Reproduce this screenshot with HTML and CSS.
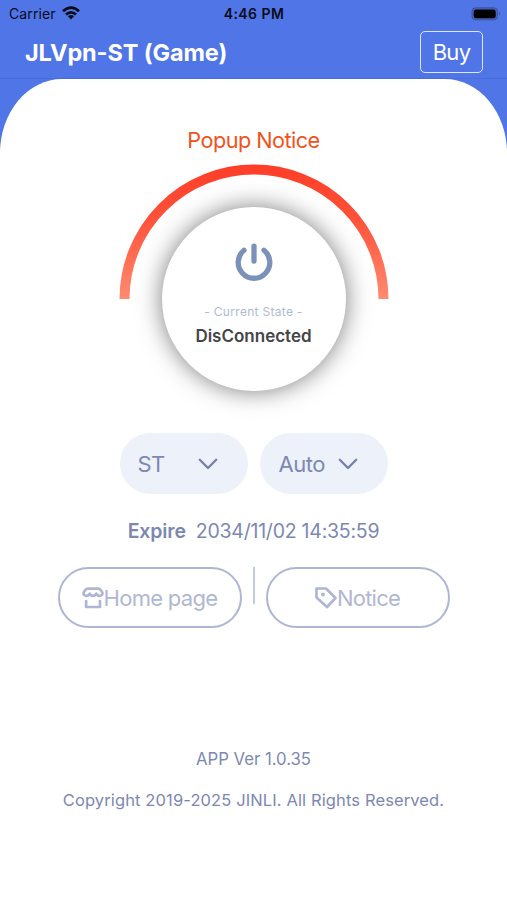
FILE: index.html
```html
<!DOCTYPE html>
<html lang="en">
<head>
<meta charset="utf-8">
<title>JLVpn-ST (Game)</title>
<link rel="stylesheet" href="styles.css">
</head>
<body>
<header class="top">
  <div class="status">
    <div class="carrier"><span>Carrier</span>
      <svg class="wifi" viewBox="0 0 18 14" width="18" height="14"><g fill="none" stroke="#080c18" stroke-width="2.7"><path d="M1 5.3Q9-2.2 17 5.3"/><path d="M4 8.6Q9 4 14 8.6"/></g><path d="M5.9 10.2Q9 7.7 12.1 10.2L9 13.5z" fill="#080c18"/></svg>
    </div>
    <span class="clock">4:46 PM</span>
    <svg class="battery" viewBox="0 0 30 14" width="30" height="14"><rect x="1" y=".8" width="25.5" height="12" rx="3.6" fill="#4663bd" stroke="#3c539a"/><rect x="2.7" y="2.5" width="22" height="8.8" rx="2.2" fill="#000"/><path d="M28 4.8q2 2 0 4z" fill="#3c539a"/></svg>
  </div>
  <nav class="nav"><h1 class="title">JLVpn-ST (Game)</h1><button class="buy">Buy</button></nav>
</header>
<div class="backdrop">
<main class="panel">
  <a class="popup">Popup Notice</a>
  <section class="dial">
    <svg class="arc" viewBox="0 0 270 136" width="270" height="136">
      <defs><linearGradient id="glow" gradientUnits="userSpaceOnUse" x1="0" y1="0" x2="0" y2="135"><stop offset="0" stop-color="#fe3d27"/><stop offset=".4" stop-color="#fe5139"/><stop offset="1" stop-color="#ff8b70"/></linearGradient></defs>
      <path d="M5.5 135A129.5 129.5 0 0 1 264.500 135" fill="none" stroke="url(#glow)" stroke-width="10"/>
    </svg>
    <button class="power">
      <svg viewBox="0 0 38 38" width="38" height="38" fill="none" stroke="#7b91b9" stroke-width="5.3" stroke-linecap="round"><path d="M9 7.200A15.800 15.800 0 1 0 29 7.200"/><path d="M19 3.200V18"/></svg>
      <span class="hint">- Current State -</span>
      <strong class="state">DisConnected</strong>
    </button>
  </section>
  <div class="selects">
    <button class="select"><span class="st">ST</span><svg viewBox="0 0 20 12" width="20" height="12"><path d="M1.800 1.700L10 10L18.200 1.700"/></svg></button>
    <button class="select"><span class="auto">Auto</span><svg viewBox="0 0 20 12" width="20" height="12"><path d="M1.800 1.700L10 10L18.200 1.700"/></svg></button>
  </div>
  <p class="expire"><strong class="label">Expire</strong><span class="date">2034/11/02 14:35:59</span></p>
  <div class="links">
    <a class="link"><svg class="shop" viewBox="0 0 22 22" width="22" height="22"><path d="M5.800 1.600H16.200Q17.800 1.600 18.700 3L20.200 5.200Q21.300 8.500 17.700 8.800Q15.300 8.900 14.300 6.700Q13.300 8.800 11 8.800Q8.700 8.800 7.700 6.700Q6.700 8.900 4.300 8.800Q.7 8.500 1.800 5.200L3.300 3Q4.200 1.600 5.800 1.600ZM4.100 14V20H18V14"/></svg><span class="home">Home page</span></a>
    <i class="divider"></i>
    <a class="link"><svg class="tag" viewBox="0 0 22 22" width="22" height="22"><path d="M1.500 1.500H11L20.500 11L12 20L1.500 10.500Z"/><circle cx="8" cy="7.500" r="1.900"/></svg><span class="notice">Notice</span></a>
  </div>
  <footer class="footer"><p class="version">APP Ver 1.0.35</p><p class="copyright">Copyright 2019-2025 JINLI. All Rights Reserved.</p></footer>
</main>
</div>
</body>
</html>
```
FILE: styles.css
```css
* { box-sizing: border-box; }
body { margin: 0; height: 900px; overflow: hidden; background: #fff; color: #7c88b2; font-family: Inter, "Liberation Sans", sans-serif; }
button { border: 0; padding: 0; font-family: inherit; color: inherit; }
h1, p { margin: 0; }
span, strong, h1, p, .popup { white-space: nowrap; }
.top { height: 79px; background: #5075e7; border-bottom: 1px solid #496cda; }
.status { height: 27px; display: grid; grid-template-columns: 1fr auto 1fr; align-items: center; padding: 0 6px 0 9px; color: #080c18; }
.carrier { display: flex; align-items: center; gap: 6px; font-size: 14px; letter-spacing: .1px; }
.wifi { margin-bottom: 1px; }
.clock { margin-left: -2px; font-size: 14px; font-weight: 600; letter-spacing: .45px; }
.battery { justify-self: end; }
.nav { height: 51px; display: flex; align-items: center; justify-content: space-between; padding: 0 24px 0 25px; color: #fff; }
.title { font-size: 23.500px; font-weight: 700; letter-spacing: -.12px; }
.buy { width: 63px; height: 42px; margin-top: -1px; border: 1.500px solid #dce5ff; border-radius: 5px; background: transparent; font-size: 22px; letter-spacing: -.7px; }
.backdrop { background: linear-gradient(#5075e7 70px, #fff 70px); }
.panel { height: 821px; display: flex; flex-direction: column; align-items: center; background: #fff; border-radius: 62px 62px 0 0 / 74px 74px 0 0; padding-top: 47px; }
.popup { height: 28px; line-height: 28px; font-size: 21.700px; letter-spacing: -.55px; color: #f2511b; }
.dial { width: 270px; height: 240px; margin-top: 10px; display: grid; justify-items: center; }
.arc, .power { grid-area: 1 / 1; }
.power { width: 184px; height: 184px; margin-top: 43px; padding-top: 36px; border-radius: 50%; background: #fff; box-shadow: 0 0 24px rgba(0,0,0,.52); display: flex; flex-direction: column; align-items: center; }
.hint { margin-top: 23px; height: 16px; line-height: 16px; font-size: 12px; letter-spacing: .3px; color: #b2b9d5; }
.state { margin-top: 6px; height: 20px; line-height: 20px; font-size: 17px; font-weight: 600; color: #454549; }
.selects { display: flex; gap: 12px; margin-top: 29px; }
.select { width: 128px; height: 61px; border-radius: 31px; background: #edf1fa; display: flex; align-items: center; justify-content: space-between; padding: 0 30px 0 18px; font-size: 22px; letter-spacing: -.5px; }
.auto { margin-left: 1px; }
.select svg { fill: none; stroke: #7480a8; stroke-width: 2.300; stroke-linecap: round; stroke-linejoin: round; }
.expire { height: 24px; line-height: 24px; margin-top: 25px; display: flex; gap: 10px; font-size: 19.500px; }
.label { font-weight: 600; letter-spacing: -.15px; }
.date { letter-spacing: -.24px; }
.links { display: flex; align-items: flex-start; gap: 11px; margin-top: 24px; }
.link { width: 184px; height: 61px; border: 2.500px solid #adb6d3; border-radius: 31px; display: flex; align-items: center; justify-content: center; font-size: 22px; letter-spacing: -.7px; color: #b0b7d2; }
.link svg { fill: none; stroke: #aeb6d4; stroke-width: 2.700; stroke-linejoin: round; stroke-linecap: round; }
.link circle { fill: #aeb6d4; stroke: none; }
.notice { letter-spacing: -.75px; }
.divider { width: 2px; height: 37px; background: #c4cadf; }
.footer { margin-top: 120px; text-align: center; font-size: 16.700px; }
.version, .copyright { height: 22px; line-height: 22px; }
.copyright { margin-top: 19px; font-size: 16.500px; letter-spacing: .12px; }
```
